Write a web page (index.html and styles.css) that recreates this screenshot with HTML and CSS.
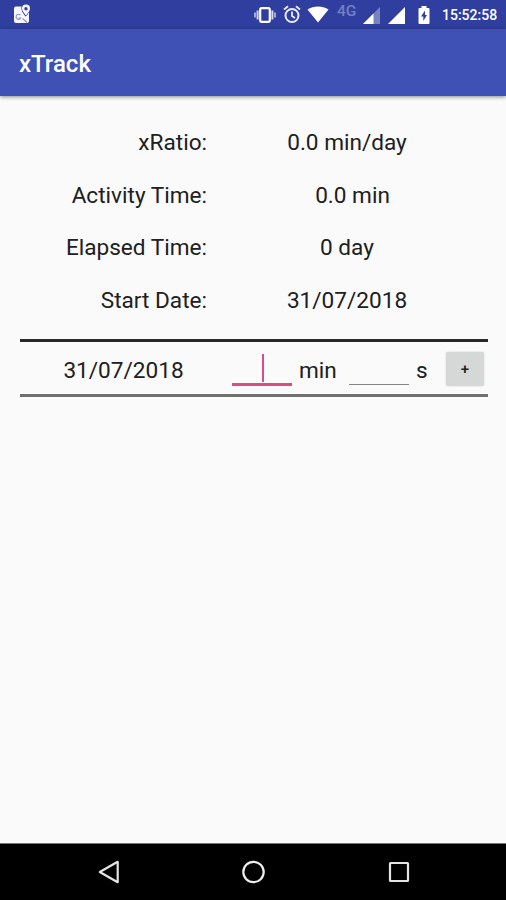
FILE: index.html
```html
<!DOCTYPE html>
<html lang="en">
<head>
<meta charset="utf-8">
<title>xTrack</title>
<link rel="stylesheet" href="styles.css">
</head>
<body>
<div class="screen">
  <div class="status-bar">
    <svg class="map-icon" width="18" height="20" viewBox="0 0 18 20">
      <path fill="#f6f6ff" d="M3 2.500H8.500C8 7 10 9 12.500 12.500C14 11.500 15 10 16 8.500V17Q16 19 14 19H3Q1 19 1 17V4.500Q1 2.500 3 2.500Z"/>
      <path fill="#f6f6ff" fill-rule="evenodd" d="M13 0.500a4 4 0 0 1 4 4c0 2.500-2.200 4.500-4 7c-1.800-2.500-4-4.500-4-7a4 4 0 0 1 4-4Zm0 2.500a1.700 1.700 0 1 0 0 3.400a1.700 1.700 0 1 0 0-3.400Z"/>
      <path d="M7.500 11.200A2.500 2.500 0 1 0 7.800 14H5.500M9.500 14.500L14 18.500" fill="none" stroke="#8d94c5" stroke-width="1.100"/>
    </svg>
    <div class="status-icons">
      <svg class="vibrate" width="22" height="18" viewBox="0 0 22 18">
        <rect x="6.200" y="2.200" width="9.600" height="13.600" rx="1.500" fill="none" stroke="#fff" stroke-width="2.200"/>
        <path d="M3.600 4.500v9M18.400 4.500v9" stroke="#d3d8f4" stroke-width="2"/>
        <path d="M1 6.500v5M21 6.500v5" stroke="#aab3e2" stroke-width="1.800"/>
      </svg>
      <svg class="alarm" width="18" height="19" viewBox="0 0 18 19">
        <circle cx="9" cy="10.500" r="6.500" fill="none" stroke="#e9ecff" stroke-width="2"/>
        <path d="M9 6.500v4.500l3 2M1 4.500l4-3.300M17 4.500l-4-3.300" fill="none" stroke="#e9ecff" stroke-width="1.800"/>
      </svg>
      <svg class="wifi" width="22" height="17" viewBox="0 0 22 17">
        <path d="M.5 3.500C6.500-.5 15.500-.5 21.500 3.500L11 16.500Z" fill="#fff"/>
      </svg>
      <span class="network">4G</span>
      <svg class="signal" width="17" height="17" viewBox="0 0 17 17">
        <path d="M0 17L17 0V17Z" fill="#7782c4"/><path d="M0 17L10.500 6.500V17Z" fill="#fff"/>
      </svg>
      <svg class="signal-full" width="17" height="17" viewBox="0 0 17 17"><path d="M0 17L17 0V17Z" fill="#fff"/></svg>
      <svg class="battery" width="12" height="18" viewBox="0 0 12 18">
        <path d="M3.500 0h5v2H10.500Q11.500 2 11.500 3V17Q11.500 18 10.500 18H1.500Q.5 18 .5 17V3Q.5 2 1.500 2H3.500Z" fill="#fff"/>
        <path d="M7 4.500L3 10.500H5.300V15L9 9H7Z" fill="#303f9f"/>
      </svg>
    </div>
    <span class="clock">15:52:58</span>
  </div>
  <header class="app-bar"><h1>xTrack</h1></header>
  <main>
    <dl class="summary">
      <dt>xRatio:</dt><dd>0.0 min/day</dd>
      <dt>Activity Time:</dt><dd class="activity">0.0 min</dd>
      <dt>Elapsed Time:</dt><dd>0 day</dd>
      <dt>Start Date:</dt><dd>31/07/2018</dd>
    </dl>
    <div class="entry">
      <span class="date">31/07/2018</span>
      <div class="field focused"><span class="caret"></span></div>
      <span class="minutes">min</span>
      <div class="field"></div>
      <span class="seconds">s</span>
      <button class="add">+</button>
    </div>
  </main>
  <nav class="nav-bar">
    <svg width="24" height="26" viewBox="0 0 24 26"><path d="M2.800 13L20.700 2.800V23.200Z" fill="none" stroke="#e4e4e4" stroke-width="2.200" stroke-linejoin="round"/></svg>
    <svg width="24" height="26" viewBox="0 0 24 26"><circle cx="11.500" cy="13" r="10.200" fill="none" stroke="#eee" stroke-width="2.200"/></svg>
    <svg width="24" height="26" viewBox="0 0 24 26"><rect x="3" y="4" width="18" height="18" rx=".5" fill="none" stroke="#e4e4e4" stroke-width="2.200"/></svg>
  </nav>
</div>
</body>
</html>
```
FILE: styles.css
```css
* { box-sizing: border-box; }
body { margin: 0; background: #fafafa; font-family: Roboto, sans-serif; color: #202020; }
.screen { width: 506px; height: 900px; display: flex; flex-direction: column; overflow: hidden; }
.status-bar { height: 29px; flex: none; display: flex; align-items: flex-start; background: #303f9f; color: #fff; }
.status-bar svg { display: block; flex: none; }
.map-icon { margin: 4px 0 0 13px; }
.status-icons { display: flex; align-items: flex-start; margin-left: 223px; }
.vibrate { margin-top: 6px; }
.alarm { margin: 5px 0 0 7px; }
.wifi { margin: 6px 0 0 6px; }
.network { width: 20px; margin: 3px 0 0 8px; font-size: 15.500px; line-height: 17px; font-weight: 500; color: #7480c4; }
.signal { margin: 7px 0 0 6px; }
.signal-full { margin: 7px 0 0 8px; }
.battery { margin: 6px 0 0 13px; }
.clock { margin: 6px 0 0 12px; font-size: 14px; line-height: 19px; font-weight: 500; white-space: nowrap; }
.app-bar { height: 67px; flex: none; display: flex; align-items: center; padding: 2px 0 0 19px; background: #3f51b5; color: #fff; box-shadow: 0 1px 4px rgba(0,0,0,.45); }
h1 { margin: 0; font-size: 24px; line-height: 28px; font-weight: 500; }
main { flex: 1; padding: 20px 18px 0 20px; font-size: 22.600px; }
.summary { display: grid; grid-template-columns: 187px 280px; grid-auto-rows: 52.500px; align-items: center; margin: 0; }
dt { text-align: right; }
dd { margin: 0; text-align: center; }
.summary dt, .summary dd { padding-top: 1px; }
.activity { padding-left: 11px; }
.entry { height: 58px; margin-top: 13px; display: flex; align-items: center; padding-top: 3px; border-top: 3px solid #292929; border-bottom: 3px solid #707070; }
.entry > span { padding-top: 2px; }
.date { width: 207px; text-align: center; }
.field { width: 60px; height: 31px; margin-left: 5px; display: flex; justify-content: center; align-items: flex-start; border-bottom: 1px solid #858585; }
.field.focused { height: 32px; border-bottom: 3px solid #dc4c83; }
.caret { width: 2px; height: 28px; margin-left: 2px; background: #dc4c83; }
.minutes { width: 44px; margin-left: 7px; }
.minutes + .field { margin: -1px 0 0 6px; }
.seconds { width: 20px; margin-left: 7px; }
.add { width: 38px; height: 34px; margin: -1px 0 0 10px; padding: 0; border: 0; border-radius: 2px; background: #d6d8d7; color: #202020; font: 500 15px Roboto, sans-serif; box-shadow: 0 0 2px rgba(0,0,0,.18); }
.nav-bar { height: 57px; flex: none; display: grid; grid-template-columns: repeat(3, 24px); justify-content: center; column-gap: 121px; padding-left: 1px; align-items: center; background: #000; border-top: 1px solid #777; }
```
